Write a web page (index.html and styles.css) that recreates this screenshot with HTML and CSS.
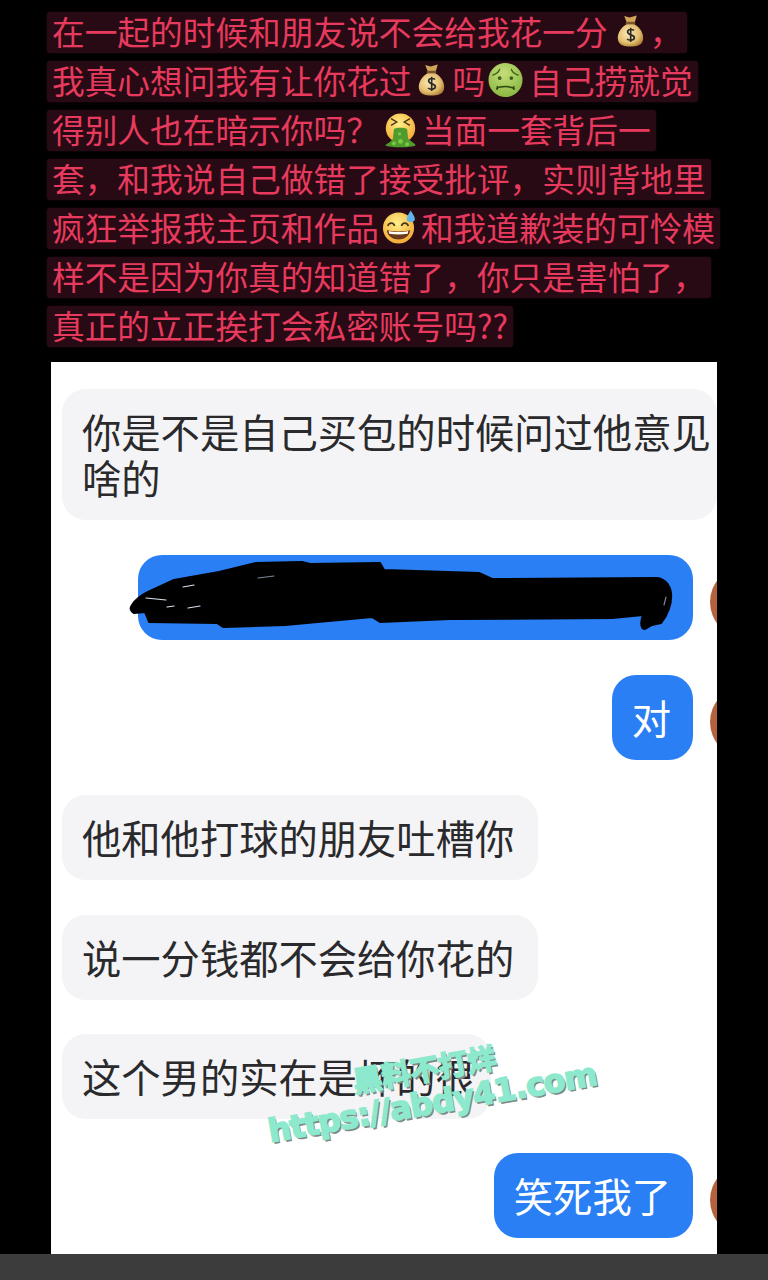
FILE: index.html
```html
<!DOCTYPE html>
<html lang="zh-CN">
<head>
<meta charset="utf-8">
<title>聊天截图</title>
<link rel="stylesheet" href="styles.css">
</head>
<body>
<svg class="defs" width="0" height="0" aria-hidden="true">
  <defs>
    <radialGradient id="bagFill" cx="42%" cy="42%" r="65%"><stop offset="0" stop-color="#fbeab8"/><stop offset="0.65" stop-color="#e4bf72"/><stop offset="1" stop-color="#ad7f34"/></radialGradient>
    <radialGradient id="greenFace" cx="45%" cy="30%" r="75%"><stop offset="0" stop-color="#c4de7a"/><stop offset="1" stop-color="#87b53e"/></radialGradient>
    <radialGradient id="yellowFace" cx="45%" cy="35%" r="70%"><stop offset="0" stop-color="#fff08a"/><stop offset="1" stop-color="#f2a52e"/></radialGradient>
    <symbol id="bag" viewBox="0 0 28 34">
      <path d="M7.5 1.5 L13 3 L20.5 1 L18.5 8 L10 8 Z" fill="#d2a658"/>
      <rect x="9" y="7.5" width="10" height="2.5" rx="1" fill="#7c5526"/>
      <path d="M10 10 C3 14 0 21 1 26 C2 32 8 33 14 33 C20 33 26 32 27 26 C28 21 25 14 18 10 Z" fill="url(#bagFill)"/>
      <path d="M17.5 16.5 C16.5 15 11 14.8 11 18 C11 21.5 18 20.5 18 24 C18 27 12 27 10.5 25.2 M14.2 13.5 V28.5" fill="none" stroke="#2c2a26" stroke-width="1.7"/>
    </symbol>
    <symbol id="sick" viewBox="0 0 36 36">
      <circle cx="18" cy="18" r="17.5" fill="url(#greenFace)"/>
      <path d="M5 13 C8 12 11 10 12 7 M31 13 C28 12 25 10 24 7" stroke="#3c5a18" stroke-width="1.3" fill="none" stroke-linecap="round"/>
      <circle cx="12" cy="16" r="1.9" fill="#3c5a18"/><circle cx="24" cy="16" r="1.9" fill="#3c5a18"/>
      <path d="M9 27 C12 24 24 24 27 27" stroke="#2f4a12" stroke-width="1.6" fill="none" stroke-linecap="round"/>
      <path d="M9.5 24.5 V27.5 M26.5 24.5 V27.5" stroke="#2f4a12" stroke-width="1.4" stroke-linecap="round"/>
    </symbol>
    <symbol id="vomit" viewBox="0 0 36 38">
      <circle cx="18" cy="16" r="15.5" fill="url(#yellowFace)"/>
      <path d="M8 6 L14 9.5 L8 13 M28 6 L22 9.5 L28 13" stroke="#4a3416" stroke-width="1.5" fill="none"/>
      <path d="M11 17 C14 15 22 15 25 17 L26 27 C30 31 33 32 34 34 C30 37 6 37 2 34 C4 32 8 31 10 27 Z" fill="#4f9b2c"/>
      <circle cx="11" cy="32" r="2" fill="#7cc843"/><circle cx="18" cy="30" r="2.5" fill="#7cc843"/><circle cx="25" cy="33" r="2" fill="#7cc843"/><circle cx="17" cy="22" r="1.8" fill="#7cc843"/>
    </symbol>
    <symbol id="sweat" viewBox="0 0 36 36">
      <circle cx="17" cy="19" r="16" fill="url(#yellowFace)"/>
      <path d="M6 17 C7 13 12 13 13 17 M20 17 C21 13 26 13 27 17" stroke="#4a3416" stroke-width="1.7" fill="none"/>
      <path d="M5 21 C10 23 24 23 29 21 C28 34 6 34 5 21 Z" fill="#6b3a1c"/>
      <path d="M7 22 C12 23.5 22 23.5 27 22 L26.5 25 C20 26 14 26 7.5 25 Z" fill="#fff"/>
      <path d="M29.5 1 C27 5 25 8 25.5 10.5 C26 13.5 33 13.5 33.8 10.5 C34.3 8 32 5 29.5 1 Z" fill="#5fb4ec"/>
    </symbol>
  </defs>
</svg>
<main class="page">
  <section class="caption">
    <p class="line">在一起的时候和朋友说不会给我花一分<svg class="emoji bag-a"><use href="#bag"/></svg>，</p>
    <p class="line">我真心想问我有让你花过<svg class="emoji bag-b"><use href="#bag"/></svg>吗<svg class="emoji round sick-a"><use href="#sick"/></svg>自己捞就觉</p>
    <p class="line">得别人也在暗示你吗？<svg class="emoji round vomit-a"><use href="#vomit"/></svg>当面一套背后一</p>
    <p class="line">套，和我说自己做错了接受批评，实则背地里</p>
    <p class="line">疯狂举报我主页和作品<svg class="emoji round sweat-a"><use href="#sweat"/></svg>和我道歉装的可怜模</p>
    <p class="line">样不是因为你真的知道错了，你只是害怕了，</p>
    <p class="line">真正的立正挨打会私密账号吗??</p>
  </section>
  <section class="panel">
    <div class="row in first"><div class="bubble gray long">你是不是自己买包的时候问过他意见啥的</div></div>
    <div class="row out gap-a">
      <div class="bubble blue redacted">
        <svg class="scribble" viewBox="0 0 555 85" aria-hidden="true">
          <path class="ink" d="M-6 50 C-2 44 4 40 10 37 L36 25 L81 17 L118 8 L164 7 L172 9 L242 8 L246 15 L341 18 L354 24 L519 23 C527 24 532 30 533 38 C534 48 530 60 523 68 L514 70 L507 74 C503 74 502 68 505 60 L474 63 L312 64 L242 67 L234 62 L147 70 L85 72 L79 68 L11 67 L7 57 L-4 58 C-8 56 -8 53 -6 50 Z"/>
          <path class="glint" d="M8 43 L28 45 M29 52 L36 51 M50 53 L62 51 M45 32 L56 30"/>
          <path class="glint dim" d="M120 23 L136 21 M528 42 L526 50"/>
        </svg>
      </div>
      <span class="avatar"></span>
    </div>
    <div class="row out gap-b"><div class="bubble blue">对</div><span class="avatar"></span></div>
    <div class="row in gap-b"><div class="bubble gray wide-end">他和他打球的朋友吐槽你</div></div>
    <div class="row in gap-c"><div class="bubble gray wide-end">说一分钱都不会给你花的</div></div>
    <div class="row in gap-d"><div class="bubble gray short-end">这个男的实在是坏的很</div></div>
    <div class="row out gap-d"><div class="bubble blue">笑死我了</div><span class="avatar"></span></div>
    <div class="watermark">
      <span class="mark-cn">黑料不打烊</span>
      <span class="mark-en">https://abdy41.com</span>
    </div>
  </section>
  <footer class="bar"></footer>
</main>
</body>
</html>
```

FILE: styles.css
```css
* { box-sizing: border-box; }
html, body { margin: 0; padding: 0; background: #000; }
.defs { position: absolute; }
.page {
  width: 768px;
  height: 1280px;
  display: flex;
  flex-direction: column;
  background: #000;
  overflow: hidden;
  font-family: "Noto Sans CJK SC", "Noto Sans", sans-serif;
}
.caption {
  height: 362px;
  padding: 12px 0 0 47px;
  display: flex;
  flex-direction: column;
  gap: 8px;
  align-items: flex-start;
}
.line {
  margin: 0;
  height: 41px;
  display: flex;
  align-items: center;
  padding: 0 5px 3px;
  font-size: 32.7px;
  line-height: 38px;
  color: #e83a5e;
  background: #270a13;
  border-radius: 3px;
  box-shadow: 0 0 2px #270a13;
  white-space: nowrap;
}
.emoji { width: 27px; height: 34px; flex: none; }
.emoji.round { width: 35px; height: 36px; }
.bag-a { margin: 0 6px 0 9px; }
.bag-b { margin: 0 8px 0 6px; }
.sick-a { margin: 0 6px 0 3px; }
.vomit-a { margin: 4px 4px 0 4px; }
.sweat-a { margin: 0 4px 0 3px; }
.panel {
  position: relative;
  margin-left: 51px;
  width: 666px;
  height: 892px;
  flex: none;
  background: #fff;
  overflow: hidden;
  padding-top: 27px;
  font-size: 39.3px;
}
.row { display: flex; align-items: center; }
.row.in { justify-content: flex-start; padding-left: 11px; }
.row.out { justify-content: flex-end; }
.gap-a, .gap-b, .gap-c { margin-top: 35px; }
.gap-d { margin-top: 34px; }
.bubble {
  height: 85px;
  padding: 0 22px 2px 20px;
  border-radius: 24px;
  line-height: 46px;
  display: flex;
  align-items: center;
}
.gray { background: #f4f4f6; color: #2a2a2c; }
.blue { background: #2a7ff5; color: #fff; }
.wide-end { padding-right: 24px; }
.short-end { padding-right: 16px; }
.long { width: 660px; height: 131px; padding: 0 0 2px 20px; }
.redacted { position: relative; width: 555px; }
.scribble {
  position: absolute;
  left: 0;
  top: 0;
  width: 555px;
  height: 85px;
  overflow: visible;
}
.ink { fill: #000; stroke: #000; stroke-width: 2; stroke-linejoin: round; }
.glint { fill: none; stroke: #d8e2f0; stroke-width: 1.2; stroke-linecap: round; }
.glint.dim { stroke: #7c8494; }
.avatar {
  flex: none;
  width: 72px;
  height: 72px;
  margin: -6px -65px -14px 17px;
  border-radius: 50%;
  background: #b5623c;
}
.bar { flex: 1; background: #3c3c3c; }
.watermark {
  position: absolute;
  left: 214px;
  top: 691px;
  width: 340px;
  height: 90px;
  transform: rotate(-10deg);
  color: #8de9cd;
  font-family: "DejaVu Sans", "Noto Sans CJK SC", sans-serif;
  font-weight: 700;
  -webkit-text-stroke: 1.6px #8de9cd;
  text-shadow: 1.5px 2.5px 0 #7f8a86;
}
.mark-cn {
  position: absolute;
  left: 92px;
  top: -8px;
  font-size: 29px;
  white-space: nowrap;
}
.mark-en {
  position: absolute;
  left: 0;
  top: 30px;
  font-size: 32px;
  letter-spacing: -1px;
  white-space: nowrap;
}
```
